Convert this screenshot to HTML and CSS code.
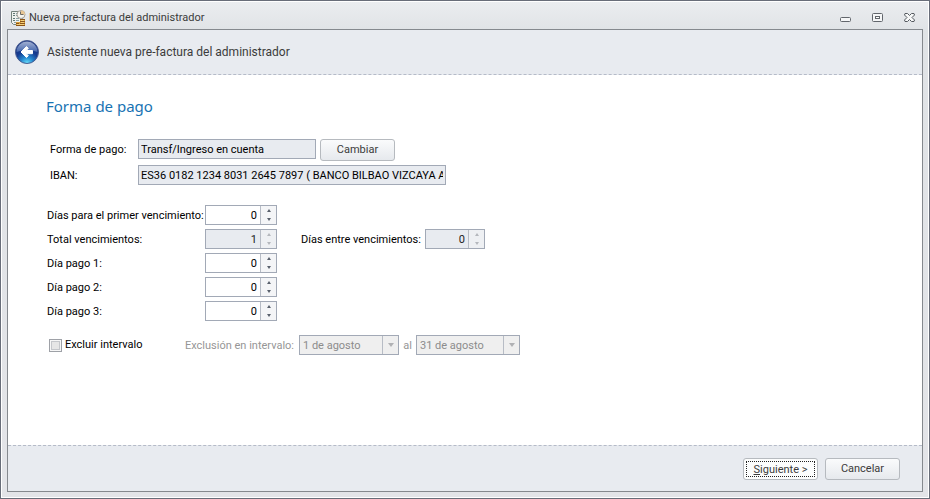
FILE: index.html
```html
<!DOCTYPE html>
<html lang="es">
<head>
<meta charset="utf-8">
<meta name="viewport" content="width=device-width, initial-scale=1">
<title>Nueva pre-factura del administrador</title>
<link rel="stylesheet" href="styles.css">
</head>
<body>
<div class="window">
  <div class="titlebar">
    <svg class="app-icon" width="16" height="18" viewBox="0 0 16 18" aria-hidden="true">
      <path d="M1.500 2.500h11v13h-9l-2-2z" fill="#eef1ee" stroke="#74827c"/>
      <path d="M3 4.500h2M3 6.500h2M3 9.500h2M3 11.500h2" stroke="#5f7772"/>
      <path d="M6 4.500h2M6 6.500h2M6 9.500h3M6 11.500h3M4 13.500h2" stroke="#8aa2a6"/>
      <circle cx="11" cy="5.500" r="4" fill="#f5f4ef" stroke="#a29c94"/>
      <path d="M11 1.500a4 4 0 0 1 4 4h-4z" fill="#e8c694"/>
      <path d="M10.500 2.500v3h3" fill="none" stroke="#6e6a64"/>
      <path d="M10 10h5v7h-5zM6 13h4v4H6z" fill="#d9a03e"/>
      <path d="M10 10.500h5M10 12.500h5M10 14.500h5M6 16.500h9M6 14.500h3" stroke="#8c5418"/>
      <path d="M11 11.500h3M11 13.500h3M7 15.500h7" stroke="#f2d27c"/>
    </svg>
    <span class="title">Nueva pre-factura del administrador</span>
    <div class="window-controls">
      <button type="button" aria-label="Minimizar"><svg width="13" height="11" viewBox="0 0 13 11"><rect x="1.500" y="5.500" width="10" height="4" rx="1" fill="#f5f6f7" stroke="#62666c"/></svg></button>
      <button type="button" aria-label="Maximizar"><svg width="13" height="11" viewBox="0 0 13 11"><rect x="1.500" y="1.500" width="10" height="8" rx="1" fill="#f5f6f7" stroke="#62666c"/><rect x="4.500" y="4.500" width="4" height="2" fill="#fff" stroke="#62666c"/></svg></button>
      <button type="button" aria-label="Cerrar"><svg width="13" height="11" viewBox="0 0 13 11"><path d="M2 1.500h2.500L6.500 3.500l2-2H11L11.500 3 9 5.500l2.500 2.500-.5 1.500H8.500l-2-2-2 2H2L1.500 8 4 5.500 1.500 3z" fill="#f8f9f9" stroke="#555a60"/></svg></button>
    </div>
  </div>
  <main class="wizard">
    <header class="wizard-header">
      <button type="button" class="back" aria-label="Atrás">
        <svg width="26" height="26" viewBox="0 0 26 26">
          <defs>
            <radialGradient id="orb" cx=".5" cy="1" r=".9"><stop offset="0" stop-color="#6de6ff"/><stop offset=".3" stop-color="#2589d0"/><stop offset=".6" stop-color="#153c91"/><stop offset="1" stop-color="#18347f"/></radialGradient>
            <linearGradient id="gloss" x1="0" y1="0" x2="0" y2="1"><stop offset="0" stop-color="#d0d9ee"/><stop offset="1" stop-color="#5274b8"/></linearGradient>
          </defs>
          <circle cx="13" cy="13" r="11.500" fill="url(#orb)" stroke="#4a5c91"/>
          <path d="M2.500 13A10.500 10.500 0 0 1 23.500 13Q13 9 2.500 13z" fill="url(#gloss)" opacity=".75"/>
          <path d="M7 13l5.500-5.500 1.800 1.800-2 2.200H18.500v3.200h-6.200l2 2-1.800 1.800z" fill="#fff" stroke="#fff" stroke-linejoin="round"/>
        </svg>
      </button>
      <span class="wizard-title">Asistente nueva pre-factura del administrador</span>
    </header>
    <form class="page" id="payment">
      <h1>Forma de pago</h1>
      <div class="account">
        <label for="method">Forma de pago:</label>
        <div class="line">
          <input class="field method" id="method" type="text" value="Transf/Ingreso en cuenta" readonly>
          <button type="button" class="btn">Cambiar</button>
        </div>
        <label for="iban">IBAN:</label>
        <input class="field iban" id="iban" type="text" value="ES36 0182 1234 8031 2645 7897 ( BANCO BILBAO VIZCAYA ARGENTARIA )" readonly>
      </div>
      <div class="terms">
        <label for="first">Días para el primer vencimiento:</label>
        <div class="spin"><input id="first" type="number" value="0"><span class="steps"><button type="button" aria-label="Aumentar"></button><button type="button" aria-label="Reducir"></button></span></div>
        <label for="total">Total vencimientos:</label>
        <div class="line">
          <div class="spin off"><input id="total" type="number" value="1" disabled><span class="steps"><button type="button" aria-label="Aumentar" disabled></button><button type="button" aria-label="Reducir" disabled></button></span></div>
          <label class="between" for="between">Días entre vencimientos:</label>
          <div class="spin off small"><input id="between" type="number" value="0" disabled><span class="steps"><button type="button" aria-label="Aumentar" disabled></button><button type="button" aria-label="Reducir" disabled></button></span></div>
        </div>
        <label for="day1">Día pago 1:</label>
        <div class="spin"><input id="day1" type="number" value="0"><span class="steps"><button type="button" aria-label="Aumentar"></button><button type="button" aria-label="Reducir"></button></span></div>
        <label for="day2">Día pago 2:</label>
        <div class="spin"><input id="day2" type="number" value="0"><span class="steps"><button type="button" aria-label="Aumentar"></button><button type="button" aria-label="Reducir"></button></span></div>
        <label for="day3">Día pago 3:</label>
        <div class="spin"><input id="day3" type="number" value="0"><span class="steps"><button type="button" aria-label="Aumentar"></button><button type="button" aria-label="Reducir"></button></span></div>
      </div>
      <div class="exclusion">
        <label class="check"><input type="checkbox">Excluir intervalo</label>
        <label class="muted range" for="from">Exclusión en intervalo:</label>
        <div class="combo"><select id="from" disabled><option>1 de agosto</option></select></div>
        <label class="muted to" for="until">al</label>
        <div class="combo wide"><select id="until" disabled><option>31 de agosto</option></select></div>
      </div>
    </form>
    <footer class="wizard-footer">
      <button type="submit" form="payment" class="btn primary"><span><u>S</u>iguiente &gt;</span></button>
      <button type="button" class="btn">Cancelar</button>
    </footer>
  </main>
</div>
</body>
</html>
```
FILE: styles.css
```css
* { box-sizing: border-box; }

body {
  margin: 0;
  font: 11px/22px Roboto, "Noto Sans", sans-serif;
  color: #000;
}

button, input, select { font: inherit; color: inherit; margin: 0; }
button { padding: 0; }

.window {
  display: flex;
  flex-direction: column;
  min-height: 100vh;
  padding: 0 6px 6px;
  border: 1px solid #686d79;
  box-shadow: inset 0 0 0 1px #fff;
  background: linear-gradient(#ebedf0, #e0e3e6 30px, #e3e4e8);
}

.titlebar {
  display: flex;
  align-items: center;
  height: 28px;
  padding: 5px 7px 0 3px;
}

.app-icon { margin-right: 3px; }
.title { color: #3b3b3b; }

.window-controls {
  display: flex;
  gap: 19px;
  margin-left: auto;
}

.window-controls button {
  display: flex;
  border: 0;
  background: none;
}

.wizard {
  flex: 1;
  display: flex;
  flex-direction: column;
  border: 1px solid #85898e;
  background: #fff;
}

.wizard-header {
  display: flex;
  align-items: center;
  gap: 7px;
  height: 45px;
  padding-left: 6px;
  background: #e8ebf0;
  border-bottom: 1px dashed #b5bbc8;
}

.back { display: flex; border: 0; background: none; }
.wizard-title { font-size: 12px; color: #3b3b3b; }

.page { flex: 1; padding: 19px 38px; }

h1 {
  margin: 0 0 21px;
  font-family: "Noto Sans", sans-serif;
  font-size: 15px;
  line-height: 24px;
  font-weight: 400;
  color: #1873b3;
}

.line { display: flex; }

.account {
  display: grid;
  grid-template-columns: 88px 1fr;
  grid-auto-rows: 20px;
  row-gap: 6px;
  padding-left: 4px;
}

.field {
  height: 20px;
  padding: 1px 2px 0;
  border: 1px solid #a2a9b6;
  border-radius: 0;
  background: #e8ebf0;
  outline: 0;
}

.method { width: 178px; margin-right: 4px; }
.iban { width: 308px; }

.btn {
  width: 75px;
  height: 22px;
  border: 1px solid #b6babf;
  border-radius: 3px;
  background: linear-gradient(#fafbfc, #e6e9ed);
  color: #3b3b3b;
  line-height: 20px;
}

.terms {
  display: grid;
  grid-template-columns: 158px 1fr;
  grid-auto-rows: 20px;
  row-gap: 4px;
  margin-top: 20px;
  padding-left: 1px;
  white-space: nowrap;
}

.spin {
  display: flex;
  width: 72px;
  height: 20px;
  border: 1px solid #a2a9b6;
  background: #fff;
}

.small { width: 60px; }
.off { background: #e8ebf0; color: #222; }

.spin input {
  flex: 1;
  min-width: 0;
  padding: 1px 3px 0;
  border: 0;
  background: none;
  text-align: right;
  appearance: textfield;
}

.spin input::-webkit-inner-spin-button { appearance: none; margin: 0; }

.steps {
  display: flex;
  flex-direction: column;
  width: 16px;
  border-left: 1px solid #b7bcc5;
  background: #f4f5f7;
}

.off .steps { background: #eef0f3; }

.steps button {
  flex: 1;
  display: flex;
  align-items: center;
  justify-content: center;
  border: 0;
  background: none;
}

.steps button::before {
  content: "";
  border: 2px solid transparent;
  border-top-width: 0;
  border-bottom: 3px solid #59606c;
}

.steps button:last-child::before {
  border-top: 3px solid #59606c;
  border-bottom-width: 0;
}

.off .steps button:first-child::before { border-bottom-color: #b4b7bc; }
.off .steps button:last-child::before { border-top-color: #b4b7bc; }

.between { width: 124px; margin-left: 24px; }

.exclusion {
  display: flex;
  height: 20px;
  margin-top: 14px;
  padding-left: 3px;
}

.check {
  display: flex;
  align-items: center;
  gap: 3px;
  width: 136px;
}

.check input {
  width: 13px;
  height: 13px;
  border: 1px solid #9ea1a7;
  background: #e6e6e6;
  box-shadow: inset 0 0 0 1px #f7f7f7, inset 0 0 0 2px #c5c7cb;
  appearance: none;
}

.muted { color: #969696; white-space: nowrap; }
.range { width: 114px; }
.to { width: 17px; text-align: center; }

.combo {
  position: relative;
  width: 100px;
  height: 20px;
}

.wide { width: 104px; }

.combo select {
  display: block;
  width: 100%;
  height: 20px;
  padding: 0 20px 0 3px;
  border: 1px solid #a2a9b6;
  border-radius: 0;
  background: #efefef;
  color: #8c8c8c;
  line-height: 20px;
  opacity: 1;
  appearance: none;
}

.combo::after {
  content: "";
  position: absolute;
  right: 5px;
  top: 8px;
  border: 3px solid transparent;
  border-top: 4px solid #b0b1b4;
  border-bottom: 0;
}

.combo::before {
  content: "";
  position: absolute;
  right: 16px;
  top: 1px;
  bottom: 1px;
  border-left: 1px solid #b7bcc5;
}

.wizard-footer {
  display: flex;
  justify-content: flex-end;
  gap: 7px;
  height: 46px;
  padding: 12px 22px;
  background: #e8ebf0;
  border-top: 1px dashed #b5bbc8;
}

.primary { padding: 2px; background: #fcfdfd; }

.primary span {
  display: block;
  height: 16px;
  border: 1px dotted #222;
  line-height: 16px;
}
```
